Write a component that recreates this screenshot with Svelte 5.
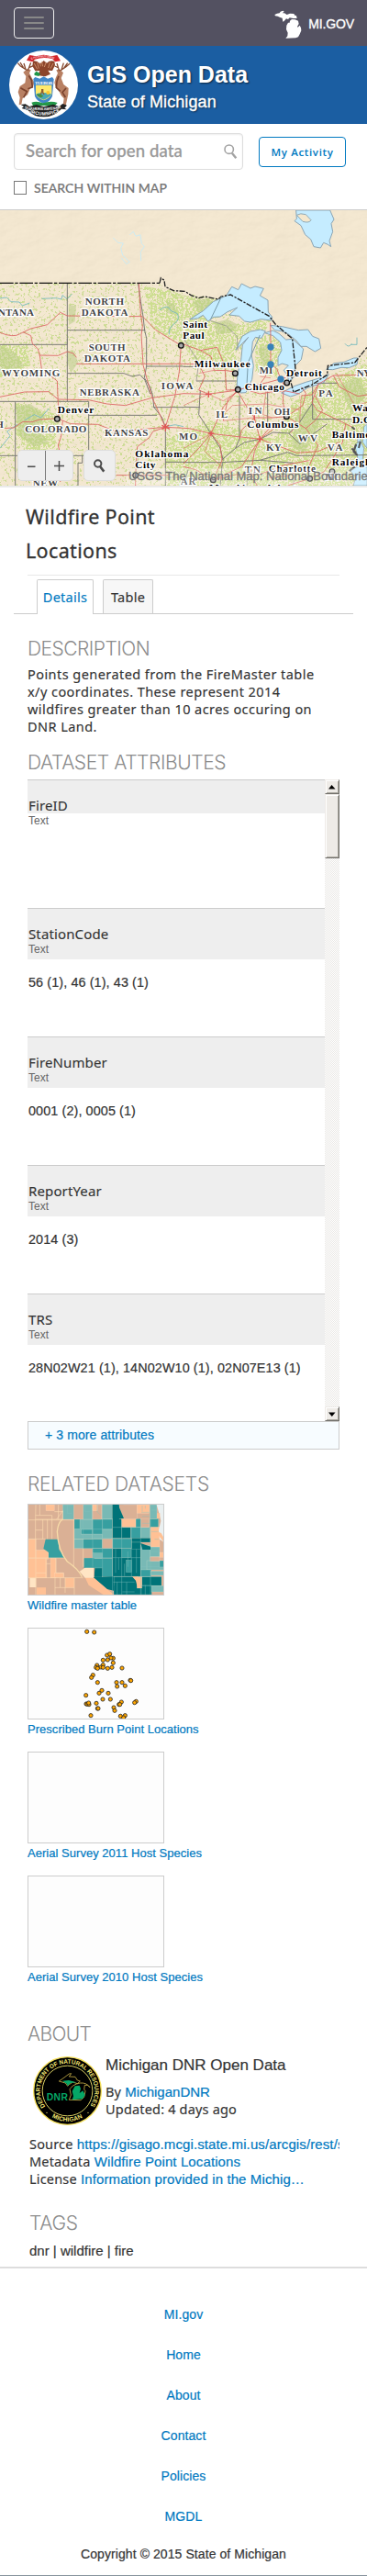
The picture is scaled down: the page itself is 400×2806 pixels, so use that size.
<script>
  const attributes = [
    { name: 'FireID', type: 'Text', values: '' },
    { name: 'StationCode', type: 'Text', values: '56 (1), 46 (1), 43 (1)' },
    { name: 'FireNumber', type: 'Text', values: '0001 (2), 0005 (1)' },
    { name: 'ReportYear', type: 'Text', values: '2014 (3)' },
    { name: 'TRS', type: 'Text', values: '28N02W21 (1), 14N02W10 (1), 02N07E13 (1)' }
  ];
  const footerLinks = ['MI.gov', 'Home', 'About', 'Contact', 'Policies', 'MGDL'];

  // Map labels: text, x, baseline, width
  const states = [
    ['NORTH', 278, 320, 127], ['DAKOTA', 266, 357, 152], ['NTANA', -6, 357, 117],
    ['SOUTH', 290, 471, 120], ['DAKOTA', 275, 507, 151], ['WYOMING', 6, 555, 190],
    ['NEBRASKA', 260, 618, 196], ['IOWA', 527, 597, 104], ['COLORADO', 82, 738, 201],
    ['KANSAS', 342, 750, 142], ['NEW', 107, 915, 82], ['MO', 585, 762, 60], ['H', -14, 723, 24],
    ['MI', 848, 545, 44], ['IL', 706, 690, 38], ['IN', 812, 678, 44], ['OH', 896, 682, 52],
    ['PA', 1042, 620, 46], ['NY', 1166, 556, 46], ['KY', 870, 797, 50], ['WV', 974, 767, 64],
    ['VA', 1070, 797, 50], ['TN', 800, 870, 52], ['AR', 590, 909, 50], ['NC', 1064, 894, 52]
  ];
  const cities = [
    ['Denver', 188, 674, 119], ['Oklahoma', 442, 818, 174], ['City', 442, 854, 66],
    ['Saint', 598, 395, 80], ['Paul', 598, 432, 70], ['Milwaukee', 635, 524, 183],
    ['Chicago', 800, 600, 130], ['Detroit', 936, 556, 116], ['Columbus', 808, 724, 168],
    ['Washington', 1152, 669, 190], ['D.C.', 1152, 709, 70], ['Baltimore', 1085, 755, 160],
    ['Raleigh', 1085, 845, 128], ['Charlotte', 878, 866, 154], ['Memphis', 684, 929, 130], ['Atlanta', 868, 929, 120]
  ];
  const dots = [[187, 694], [592, 454], [769, 545], [778, 598], [938, 576], [937, 686], [443, 878], [697, 893], [1013, 889], [1086, 866]];
  const fires = [[885, 459], [885, 516], [918, 564]];
  const burns = [
    [284,532],[308,534],[350,609],[359,605],[370,619],[363,618],[337,625],[352,624],[370,634],[317,642],[337,641],
    [314,649],[330,648],[319,652],[352,652],[337,649],[366,649],[399,651],[304,674],[299,682],[319,698],[381,698],
    [399,698],[383,711],[409,709],[426,691],[428,692],[333,724],[324,733],[354,733],[281,740],[336,753],[361,753],
    [282,768],[285,769],[291,770],[290,765],[315,766],[319,783],[321,783],[397,762],[389,770],[392,770],[372,780],
    [375,790],[445,760],[440,764],[297,806],[394,808],[409,806],[404,813]
  ];
  // County tiles: x, y, width, height, colour key
  const T = { l: '#78b9b5', m: '#379fa0', d: '#007378', o: '#ffc195', t: '#dab095' };
  const tiles = [
    [93,230,25,62,'o'],[118,265,40,30,'o'],[93,292,60,65,'o'],[165,292,18,65,'o'],[120,385,30,26,'o'],[213,357,30,32,'o'],[150,117,28,20,'o'],[178,340,30,15,'o'],
    [205,117,36,48,'l'],[243,165,60,65,'l'],[243,230,30,30,'l'],[272,117,30,48,'l'],[334,117,34,48,'l'],[303,165,62,65,'m'],[243,165,18,31,'m'],
    [272,230,62,30,'m'],[266,198,36,15,'m'],[334,165,34,32,'m'],[303,260,64,32,'m'],[275,292,93,60,'m'],[305,275,30,17,'l'],[305,213,30,15,'l'],[335,198,33,29,'l'],
    [368,117,34,110,'d'],[398,191,30,36,'d'],[368,228,62,32,'m'],[428,191,32,36,'m'],[444,163,16,28,'m'],[460,191,31,36,'l'],[490,163,28,30,'m'],
    [430,226,62,14,'d'],[368,260,92,92,'d'],[430,240,30,22,'d'],[398,260,30,30,'m'],[412,298,18,40,'m'],[460,250,32,82,'l'],[490,255,32,32,'l'],[480,300,56,30,'l'],[308,324,27,30,'d'],
    [490,117,23,46,'l'],[492,190,30,65,'o'],[460,163,28,28,'t'],[397,163,47,28,'o'],[390,117,58,46,'t'],[448,117,40,28,'o'],[335,228,33,32,'t'],[490,288,32,14,'t'],[522,273,14,16,'o'],[522,300,14,22,'m'],
    [372,352,92,59,'d'],[464,352,64,30,'d'],[462,381,34,30,'d'],[460,330,34,22,'m'],[494,334,42,14,'l'],[495,382,40,20,'l'],[335,352,37,29,'d'],[448,352,16,38,'o'],[303,117,28,48,'t'],[303,117,16,20,'o']
  ];
</script>

<div class="page">
  <header class="top">
    <button class="menu" aria-label="Menu"><i></i><i></i><i></i></button>
    <a class="migov">
      <svg width="30" height="31" viewBox="899 31 90 93" fill="#fff">
        <path d="M900 46 908 42 916 41 919 36 927 33 931 35 926 41 932 41 940 46 950 42 963 43 966 48 971 49 973 58 961 58 949 56 944 61 938 59 931 67 927 69 925 57 918 55 910 51 902 50Z" />
        <path d="M956 61 967 62 977 66 979 76 974 85 976 87 982 81 986 89 987 98 982 110 977 119 969 122 936 123 942 116 943 105 938 94 939 81 944 72 949 72 950 66Z" />
      </svg>
      <span>MI.GOV</span>
    </a>
  </header>

  <section class="brand">
    <svg width="75" height="75" viewBox="30 165 225 225">
      <circle cx="142.5" cy="277.5" r="112.5" fill="#fff" />
      <path d="M87 197 97 180 118 184Q143 174 167 184L187 180 198 199 180 202 172 193Q142 185 114 194L106 202Z" fill="#d3242b" />
      <path id="ribbonTop" d="M103 195Q142 178 181 195" fill="none" />
      <text font-size="9" fill="#fff" font-family="Liberation Sans"><textPath href="#ribbonTop" textLength="76">E PLURIBUS UNUM</textPath></text>
      <path d="M108 199Q121 197 130 208L137 204 143 198 153 206Q163 196 178 200L180 213 171 231 157 230 165 242 148 250 136 248 124 246 130 231 115 232 106 216Z" fill="#8c452b" />
      <path d="M130 204 133 217M136 200 140 217M151 203 145 219M112 207 122 226M174 207 165 224M122 204 127 224M163 204 158 222" stroke="#e8b188" stroke-width="2" fill="none" />
      <path d="M112 240 119 233 132 241 127 249 113 246Z" fill="#1d9547" />
      <path d="M88 226 101 228 96 239 104 254 112 269 108 285 99 288 90 310 74 321 70 341 62 343 65 319 59 301 65 282 82 271 85 249 76 236Z" fill="#b88063" />
      <path d="M194 226 184 229 189 239 182 255 178 270 183 287 190 292 200 312 209 322 206 343 215 345 223 308 224 288 208 276 200 255 207 238Z" fill="#b88063" />
      <path d="M88 229 67 216 58 206M76 220 66 204M84 227 78 207M91 231 101 205M97 220 109 215M197 231 216 218 228 208M210 221 221 206M201 228 208 206M194 232 186 207M192 222 179 216" stroke="#864a30" stroke-width="4" fill="none" />
      <path d="M94 247 103 262 106 285 91 290M67 287 88 299 77 319M192 248 186 266 184 286 197 298M216 288 204 302 214 318" stroke="#7b432e" stroke-width="5" fill="none" />
      <path d="M109 258 115 252 130 257 143 250 156 257 171 252 176 259 171 314Q165 331 144 339 122 332 114 315Z" fill="#4187c9" />
      <path d="M117 278H169V307Q164 321 143 328 121 321 117 307Z" fill="#ffe96c" />
      <path d="M118 307Q142 299 168 307 163 319 143 326 124 321 118 307Z" fill="#4ba7b4" />
      <path d="M119 309Q130 302 142 314L134 319Q124 317 119 309Z" fill="#42903c" />
      <circle cx="157" cy="303" r="6" fill="#ffc62d" />
      <path d="M135 291h7v10l4 8h-4l-4-7-4 8h-3l4-13Z" fill="#965f2b" />
      <text x="114" y="275" textLength="58" font-size="15" font-family="Liberation Serif" font-weight="bold" fill="#fff">TUEBOR</text>
      <path d="M103 335Q121 329 140 337 166 328 188 336L180 345H108Z" fill="#249849" />
      <path d="M68 342 83 340 96 348 119 342 143 349 174 341 193 348 205 339 219 344 211 353 219 358 201 356Q176 382 143 382 110 382 89 359L71 354 78 348Z" fill="#222" />
      <path id="ribbonMid" d="M80 355Q143 367 208 352" fill="none" />
      <path id="ribbonLow" d="M88 364Q143 391 202 362" fill="none" />
      <text font-size="12" fill="#fff" font-family="Liberation Sans" font-weight="bold"><textPath href="#ribbonMid" textLength="120">SI QUÆRIS AMŒNAM</textPath></text>
      <text font-size="15" fill="#fff" font-family="Liberation Sans" font-weight="bold"><textPath href="#ribbonLow" textLength="112">CIRCUMSPICE</textPath></text>
    </svg>
    <div class="brandtext">
      <h1>GIS Open Data</h1>
      <p>State of Michigan</p>
    </div>
  </section>

  <section class="search">
    <div class="row">
      <div class="field">
        <span>Search for open data</span>
        <svg width="15" height="17" viewBox="0 0 15 17" fill="none" stroke="#a3a3a3">
          <circle cx="5.7" cy="5.7" r="4.7" stroke-width="1.6" /><path d="M8.8 9.8 13.3 15.2" stroke-width="2.4" />
        </svg>
      </div>
      <button class="activity">My Activity</button>
    </div>
    <label><span class="box"></span>SEARCH WITHIN MAP</label>
  </section>

  <section class="map">
    <svg width="400" height="300" viewBox="0 12 1200 900">
      <defs>
        <filter id="speckle" x="0" y="0" width="1" height="1" color-interpolation-filters="sRGB">
          <feTurbulence type="fractalNoise" baseFrequency="0.14" numOctaves="3" seed="4" />
          <feColorMatrix values="0 0 0 0 .8  0 0 0 0 .87  0 0 0 0 .56  0 0 0 12 -5.4" />
          <feComposite in2="SourceGraphic" operator="in" />
        </filter>
        <filter id="sparse" x="0" y="0" width="1" height="1" color-interpolation-filters="sRGB">
          <feTurbulence type="fractalNoise" baseFrequency="0.12" numOctaves="3" seed="9" />
          <feColorMatrix values="0 0 0 0 .8  0 0 0 0 .86  0 0 0 0 .58  0 0 0 12 -7" />
          <feComposite in2="SourceGraphic" operator="in" />
        </filter>
        <filter id="relief" x="0" y="0" width="1" height="1" color-interpolation-filters="sRGB">
          <feTurbulence type="fractalNoise" baseFrequency="0.012 0.018" numOctaves="5" seed="2" result="n" />
          <feDiffuseLighting in="n" surfaceScale="7" lighting-color="#fff"><feDistantLight azimuth="225" elevation="62" /></feDiffuseLighting>
        </filter>
      </defs>
      <rect y="12" width="1200" height="900" fill="#f5e8cf" />
      <rect y="12" width="1200" height="900" filter="url(#relief)" opacity=".08" />
      <path d="M460 252H522L560 274 610 284 720 302 790 375 886 372 830 420 780 540 820 600 960 620 1080 550 1160 512 1200 480V912H0V252H460Z" filter="url(#sparse)" />
      <path d="M600 290 720 305 680 372 790 390 830 372 886 370 870 402 780 430 766 540 640 520 600 450ZM835 430 895 415 925 440 920 490 905 560 835 540ZM540 760 690 700 900 760 960 640 1070 570 1200 510V912H540ZM470 260 560 275 600 290 598 450 500 400ZM0 450 90 450 100 520 0 560ZM50 640 190 680 180 790 90 800 50 740Z" filter="url(#speckle)" />
      <g fill="#b9cc86" opacity=".55">
        <path d="M224 320l25 5-4 50-20 12ZM222 470l20 4 14 35-24 35-10-30ZM0 455l50 22 28 45-55 20-23-20ZM52 655l48-10 50 40-30 35 40 50-50 15-50-40ZM545 308l28 14 4 30-33-3ZM630 310l50-10 30 20-60 30ZM700 380l44-12 34 18-20 26-50 6ZM843 462l30-8 10 60-24 10ZM965 690l60-45 20 60-50 100-40-20ZM1110 585l60-30 30 60-50 60Z" />
      </g>
      <g fill="#c5ecff" stroke="#8aa4b3" stroke-width="3" stroke-linejoin="round">
        <path d="M968 12 970 40 963 47 984 62 998 92 1016 107 1026 131 1048 135 1058 118 1072 124 1082 131 1077 112 1088 82 1083 56 1092 42 1079 12Z" />
        <path d="M620 369 664 341 697 311 740 291 758 262 779 272 790 252 819 267 834 261 862 268 850 291 876 306 877 345 890 361 888 372 853 368 819 378 800 375 782 358 750 354 776 330 744 344 720 360 698 361 680 375 664 355 647 365Z" />
        <path d="M771 469 792 424 819 408 851 402 868 407 855 430 835 427 826 442 822 484 829 520 824 565 804 608 786 609 774 590 777 546 788 503 793 452 812 427Z" />
        <path d="M866 413 892 405 912 415 935 435 957 433 992 465 985 500 965 520 965 552 945 575 940 552 928 535 943 519 922 513 909 520 909 493 921 470 917 444 893 422Z" />
        <path d="M884 388 922 392 976 404 1007 402 1022 424 1043 432 1049 463 1030 474 1002 457 984 457 969 438 943 417 921 407 899 404Z" />
        <path d="M920 609 959 588 1000 574 1040 562 1075 548 1058 576 1006 592 974 613 950 621ZM1067 532 1092 512 1125 508 1157 495 1171 495 1167 516 1141 527 1116 526 1088 533Z" />
      </g>
      <path d="M1160 780 1177 765 1190 790 1186 824 1200 850V912H1155L1164 884 1146 864 1172 846 1168 812ZM1170 745 1176 756 1183 770 1169 770ZM1190 720 1200 710V790L1186 770Z" fill="#bfeaff" stroke="#87949b" stroke-width="2" />
      <path d="M970 28Q982 20 1000 26L1017 44Q1012 55 990 49Z" fill="#f4e7cd" stroke="#8fa9b5" stroke-width="3" />
      <g fill="none" stroke="#70b8bd" stroke-width="2.5">
        <path d="M0 300 22 297 36 311 63 312 73 324 97 315M137 301 185 299 201 303 204 290 220 302 235 286M521 339Q549 316 558 340L580 350Q589 369 571 382 550 397 553 418M0 790 33 749 23 735 57 712M80 698 112 680 134 690 160 660M548 718 572 713 600 719" />
        <path d="M1128 448Q1140 464 1150 448M1167 428v23h-20" />
      </g>
      <path d="M370 102 386 118 403 120 395 136 401 159 424 181 413 188 397 168M424 92 436 82 444 97 459 92 463 121 472 130 460 148 461 178" fill="none" stroke="#cdebf3" stroke-width="3" />
      <g fill="none" stroke="#7b7b76" stroke-width="3">
        <path d="M220 252V637M220 404H475M0 451H220V433M220 545H405L432 555 458 550 474 567 491 612M0 637H290M50 637V912M290 637V814M0 814H290M290 682H513M541 728V912M269 814V838H255V912M452 252 460 310 468 360 473 405 479 430V522M479 522H600M479 522 472 560 491 590 500 620 503 655 530 690 541 722M500 656H600M541 835H610M600 523 643 523M642 570H772M783 618V760L770 790 725 828M875 605V720M1022 567V695M1022 695H1150M1031 577H1104M600 655 655 656M655 600 650 680 690 742M600 836 725 836 850 829 960 838M770 790 799 771 850 760 893 738 944 741 977 709 996 680 1022 642M944 741 980 775 1070 710M850 829 940 803 970 814 1200 812M727 838 720 912M690 742 720 790 730 830M600 912 615 860" />
      </g>
      <path d="M600 430 650 510 642 570M541 885 610 885M960 865 960 912M808 850 808 912M686 372 740 390 775 425 778 470" fill="none" stroke="#888" stroke-width="2" />
      <g fill="none" stroke="#dc6261" stroke-width="3" opacity=".85">
        <path d="M0 412Q45 430 65 416L100 399 155 386 197 346 220 357 465 359M75 410 101 422 106 448 124 465 130 486 136 530 187 570 192 690M128 486 190 487 220 474 240 480 250 493M454 252 460 350 466 390 462 420 468 518 497 623 541 721M466 359 510 404 592 454 586 540 572 620 555 675 541 721M250 514H600M0 622 80 606 160 605 190 630 290 632 350 645 410 650 497 625 600 611M0 725 45 723 75 703 105 704 130 696 188 692 230 710 320 712 380 735 541 721M205 700 200 750 190 780 200 820 197 900M541 721 500 735 488 755 449 785 443 878M541 721 620 725 690 742M380 878H550M290 840 355 840M443 878 443 912" />
        <path d="M600 450 655 470 690 490 700 535 740 536 768 540M655 470 710 460 735 520 740 600 778 598M600 514 650 515 670 555 650 600 682 613M600 611 680 613 778 600 730 655 690 742 650 790 600 840M778 600 745 630 730 700M690 742 720 780 726 830 697 893 790 850 850 760 690 742M778 605 804 650 832 690 890 690 937 686 990 650 1000 610 985 590M832 690 790 730 783 760M832 690 850 760 885 720M937 686 890 730 850 760 832 800 820 870 840 912M778 600 810 590 875 575 930 560 950 550M810 600 850 612 885 606 930 602 980 612M884 380 885 430 885 515 905 530 918 564 928 582 925 640 937 686M885 516 865 560 842 590M937 686 1000 725 1030 700 1055 665 1030 618M985 618 1020 615 1041 580 1090 552 1190 550M1090 552 1110 590 1170 620 1200 615M1041 580 1020 640 1036 665 1110 700 1150 720M1000 725 1040 780 1010 850 940 880 880 885M1130 710 1120 770 1090 820 1060 866 1013 889 940 912M850 760 970 805 1040 800 1110 770M697 893 640 860 600 850M697 893 770 876 850 875 930 845 1010 830" />
        <path d="M700 535 650 545M682 613 600 650M682 613 730 635 778 605M730 680 760 650 870 645 980 665M730 700 832 690M985 618 980 700 950 740M1100 545 1160 650 1200 640M600 790 690 742 670 800 725 850M885 560 850 555M870 602 860 680 890 690" stroke-width="2" />
      </g>
      <path d="M541 710v24M529 715l26 12M529 728l24-14M682 604v20M672 613h20M778 587v22M767 597h20M850 750v20M840 760h20M832 681v18M690 733v18M681 741h19M937 676v20" stroke="#df5554" stroke-width="4" />
      <path d="M0 250H522" stroke="#111" stroke-width="4" stroke-dasharray="44 5 10 5" />
      <path d="M522 250 526 233 537 241 540 262 568 275 605 277 625 290 650 299 670 294 714 303 723 294 754 288 880 358 900 384 956 432 966 530 950 570 960 606 1020 582 1070 550 1072 520 1160 510 1200 460" fill="none" stroke="#222" stroke-width="4" stroke-dasharray="18 5 7 4" />
      <path d="M688 370 725 293M806 602 811 510 850 420" fill="none" stroke="#789aa8" stroke-width="3" />
      <path d="M1150 790l14 15M1155 800l14 13M1165 777l-10 24M1148 829l16 11M1160 850l-18 14M1178 769l-5 20M1150 720l10 8" stroke="#555" stroke-width="6" />
      <g fill="#aaa" stroke="#111" stroke-width="4">{#each dots as [x, y]}<circle cx={x} cy={y} r="8.5" />{/each}</g>
      <g class="halo">
        <g font-family="Liberation Serif" font-weight="bold" font-size="33" fill="#454545">
          {#each states as [name, x, y, w]}<text {x} {y} textLength={w}>{name}</text>{/each}
        </g>
        <g font-family="Liberation Serif" font-weight="bold" font-size="34" fill="#000">
          {#each cities as [name, x, y, w]}<text {x} {y} textLength={w}>{name}</text>{/each}
        </g>
      </g>
      <g fill="#3782b9">{#each fires as [x, y]}<circle cx={x} cy={y} r="11" />{/each}</g>
    </svg>
    <div class="controls">
      <div class="zoomers">
        <button aria-label="Zoom out"><svg width="9" height="9"><path d="M0 5.3H8.5" stroke="#4d4d4d" stroke-width="1.5" /></svg></button>
        <button aria-label="Zoom in"><svg width="11" height="11"><path d="M0 5.5H11M5.5 0V11" stroke="#4d4d4d" stroke-width="1.5" /></svg></button>
      </div>
      <button class="find" aria-label="Find"><svg width="13" height="15" viewBox="0 0 13 15" fill="none" stroke="#4c4c4c"><circle cx="4.7" cy="5" r="3.7" stroke-width="2" /><path d="M7 8 11.3 13.6" stroke-width="2.6" /></svg></button>
    </div>
    <div class="credit">USGS The National Map: National Boundaries</div>
  </section>

  <main>
    <h2 class="title">Wildfire Point<br />Locations</h2>
    <nav class="tabs"><a class="on">Details</a><a class="off">Table</a></nav>

    <h3 class="h-desc">Description</h3>
    <p class="desc">Points generated from the FireMaster table<br />x/y coordinates. These represent 2014<br />wildfires greater than 10 acres occuring on<br />DNR Land.</p>

    <h3 class="h-attr">Dataset Attributes</h3>
    <div class="attrs">
      <div class="list">
        {#each attributes as a}
          <div class="attr">
            <div class="head" class:short={!a.values}>
              <div class="name">{a.name}</div>
              <div class="type">{a.type}</div>
            </div>
            <div class="vals">{a.values}</div>
          </div>
        {/each}
      </div>
      <div class="bar">
        <span class="btn"><svg width="8" height="5"><path d="M0 4.5 3.5 0 7.5 4.5Z" /></svg></span>
        <span class="thumb"></span>
        <span class="btn end"><svg width="8" height="5"><path d="M0 .5H7.5L3.8 5Z" /></svg></span>
      </div>
    </div>
    <a class="more">+ 3 more attributes</a>

    <h3 class="h-rel">Related Datasets</h3>
    <div class="related">
      <a class="card">
        <div class="pic">
          <svg width="147" height="98" viewBox="93 117 441 294">
            <rect x="93" y="117" width="441" height="294" fill="#dab095" />
            <g stroke="#fff3dd" stroke-opacity=".35" stroke-width="1.5">{#each tiles as [x, y, w, h, c]}<rect {x} {y} width={w} height={h} fill={T[c]} />{/each}</g>
            <path d="M390 117H401L447 163 397 163Z" fill="#dab095" /><path d="M386 117 405 162H368V117Z" fill="#007378" />
            <path d="M241 324H275V292L310 325 308 354H335L372 411H93V357H240Z" fill="#dab095" />
            <path d="M305 354 334 354 372 352V398L350 393Z" fill="#007378" />
            <path d="M278 355H305L350 393 372 411H338L290 380Z" fill="#ffc195" />
            <path d="M213 357H243V388H213ZM120 388H150V411H120Z" fill="#ffc195" />
            <path d="M275 292H308V324H275Z" fill="#379fa0" />
            <path d="M260 335 278 323H306V356H278Z" fill="#ffe5c4" /><path d="M97 357H118V387H97Z" fill="#ffe5c4" />
            <path d="M149 230H190L193 263 211 291H159V273L142 261Z" fill="#379fa0" />
            <path d="M117 117 116 165H205V137L185 165M93 167H243M191 117V165M116 152H170V165M130 117V152M178 140H205M116 165V292M93 229H149M140 165V229M155 165V229M170 165V229M116 200H140M93 291H209M117 292V411M150 292V355M183 292V340M93 356H272M180 356V411M118 340H150M150 310H165M183 340H208V356M180 388H243M213 356V405M243 356V411M197 356V388M241 165V320M272 260V320" fill="none" stroke="#fbd9b0" stroke-width="2" />
            <path d="M205 165Q190 174 187 205 190 268 220 303 256 327 268 353" fill="none" stroke="#f8dca9" stroke-width="4" />
            <path d="M220 117V145H235M278 117V140H295M318 117V140L330 152M272 165V260M303 165V320M335 117V352M368 227V411M398 170V411M430 191V352M460 165V411M492 163V411M243 197H368M368 191H460M303 228H430M303 260H400M303 290H460M368 352H528M378 262V340M388 330V290M407 350V310M418 270V320M446 262V340M383 370V411M414 370V411M475 380V411M370 370H440M400 402H440M462 382H530M462 142H488M465 155H488M465 178H490M465 120V140M475 120V130M495 135H513M495 205H520M505 230H520M460 320H536M495 270H522" fill="none" stroke="#84c4bd" stroke-width="1.5" opacity=".8" />
            <path d="M512 117H536V240L522 230 519 200 526 170 520 145Z" fill="#eaf0f1" /><path d="M513 145H523V162H513M514 205 527 210 536 225V240L520 220Z" fill="#ffc195" />
            <path d="M460 243 492 254V264H466Z" fill="#007378" /><path d="M432 352H450V390L444 365Z" fill="#ffc195" />
          </svg>
        </div>
        <span>Wildfire master table</span>
      </a>
      <a class="card">
        <div class="pic"><svg width="147" height="98" viewBox="93 522 441 294"><g fill="#ffa600" stroke="#222" stroke-width="2.4">{#each burns as [x, y]}<circle cx={x} cy={y} r="6.3" />{/each}</g></svg></div>
        <span>Prescribed Burn Point Locations</span>
      </a>
      <a class="card"><div class="pic"></div><span>Aerial Survey 2011 Host Species</span></a>
      <a class="card"><div class="pic"></div><span>Aerial Survey 2010 Host Species</span></a>
    </div>

    <h3 class="h-about">About</h3>
    <div class="about">
      <svg width="75" height="75" viewBox="108 150 225 225">
        <circle cx="220.5" cy="262.5" r="110.5" fill="#000" stroke="#f4df58" stroke-width="4" />
        <circle cx="220.5" cy="262.5" r="82" fill="none" stroke="#d9cf63" stroke-width="3" />
        <path id="arcTop" d="M148.900 315.500A89 89 0 1 1 292.100 315.500" fill="none" />
        <path id="arcBottom" d="M160 342A100 100 0 0 0 282 342" fill="none" />
        <g font-family="Liberation Sans" font-weight="bold" font-size="20" fill="#f3e774">
          <text><textPath href="#arcTop" startOffset="2" textLength="385" lengthAdjust="spacingAndGlyphs">DEPARTMENT OF NATURAL RESOURCES</textPath></text>
          <text><textPath href="#arcBottom" startOffset="12" textLength="105">MICHIGAN</textPath></text>
        </g>
        <circle cx="153" cy="334" r="2" fill="#f3e774" /><circle cx="288" cy="334" r="2" fill="#f3e774" />
        <path d="M193 231 210 219 226 207 233 206 226 216 246 217 253 228 262 231 253 239 238 234 226 242 221 247 214 237ZM262 237Q283 235 294 251 287 241 277 244L275 258 279 263 275 283 264 293 226 292 232 276 228 257 238 246 250 240Z" fill="none" stroke="#c5ad47" stroke-width="2.5" />
        <path d="M204 230 225 228 249 235 231 237 221 246 218 239ZM245 247 260 245 264 256 260 270 271 262 278 276 270 289 236 292 240 280 236 264Z" fill="#05a766" />
        <text x="152" y="294" textLength="70" font-family="Liberation Sans" font-weight="bold" font-size="31" fill="#05a766">DNR</text>
      </svg>
      <div>
        <h4>Michigan DNR Open Data</h4>
        <p><b class="k">By</b> <a>MichiganDNR</a></p>
        <p class="k">Updated: 4 days ago</p>
      </div>
    </div>
    <div class="meta">
      <p><b class="k">Source</b> <a>https://gisago.mcgi.state.mi.us/arcgis/rest/services</a></p>
      <p><b class="k">Metadata</b> <a>Wildfire Point Locations</a></p>
      <p><b class="k">License</b> <a>Information provided in the Michig…</a></p>
    </div>

    <h3 class="h-tags">Tags</h3>
    <p class="tags">dnr | wildfire | fire</p>
  </main>

  <footer>
    {#each footerLinks as link}<a>{link}</a>{/each}
    <p>Copyright © 2015 State of Michigan</p>
  </footer>
</div>

<style>
  :global(body) { background: #fff; }
  .page { width: 400px; height: 2806px; overflow: hidden; box-sizing: border-box; border-bottom: 1px solid #87939d; font-family: "Liberation Sans", sans-serif; color: #333; }
  .page :global(*) { box-sizing: border-box; }
  h1, h2, h3, h4, p { margin: 0; font-weight: normal; }
  a { color: #0079c1; text-decoration: none; }
  button { padding: 0; margin: 0; }
  svg { display: block; flex: none; }

  .top { height: 50px; background: #535161; display: flex; justify-content: space-between; padding: 8px 14px 0 15px; }
  .menu { width: 44px; height: 34px; border: 1px solid #eee; border-radius: 4px; background: none; display: flex; flex-direction: column; align-items: center; justify-content: center; gap: 4px; }
  .menu i { width: 22px; height: 2px; border-radius: 1px; background: #888; }
  .migov { display: flex; gap: 7px; color: #fff; padding-top: 3px; }
  .migov span { font-size: 14px; line-height: 30px; letter-spacing: -.15px; -webkit-text-stroke: .35px #fff; }

  .brand { height: 85px; background: #1b5ea2; display: flex; padding: 5px 10px; gap: 10px; color: #fff; }
  .brandtext { padding-top: 10px; text-shadow: 1px 1px 2px rgba(0, 0, 0, .6); }
  h1 { font-size: 25px; font-weight: bold; line-height: 32px; }
  .brandtext p { font-size: 18px; line-height: 28px; letter-spacing: .1px; -webkit-text-stroke: .35px #fff; }

  .search { height: 93px; padding: 10px 15px 0; }
  .row { display: flex; gap: 17px; align-items: center; }
  .field { width: 250px; height: 40px; border: 1px solid #ddd; border-radius: 4px; box-shadow: inset 0 1px 2px #eee; display: flex; justify-content: space-between; align-items: center; padding: 0 5px 0 12px; font: 500 18.5px/36px Lato, sans-serif; color: #999; letter-spacing: .13px; }
  .field span { height: 38px; -webkit-text-stroke: .25px; }
  .activity { width: 95px; height: 33px; border: 1px solid #0079c1; border-radius: 4px; background: #fff; color: #0079c1; font: 600 11.500px/31px "Open Sans", sans-serif; letter-spacing: .65px; }
  label { display: flex; align-items: center; gap: 8px; margin-top: 12px; height: 15px; font: 500 14px/15px Lato, sans-serif; color: #777; letter-spacing: .04px; -webkit-text-stroke: .2px; }
  .box { width: 14px; height: 15px; border: 1px solid #777; }

  .map { position: relative; height: 303px; border-top: 1px solid #ccc; border-bottom: 2px solid #eaeaea; overflow: hidden; }
  .halo text { paint-order: stroke; stroke: #fff; stroke-width: 8px; stroke-linejoin: round; }
  .controls { position: absolute; left: 19px; top: 261px; display: flex; gap: 11px; }
  .zoomers { display: flex; border-radius: 5px; border: 1px solid #ddd; overflow: hidden; }
  .controls button { width: 29px; height: 32px; border: 0; background: #eee; display: flex; align-items: center; justify-content: center; }
  .zoomers button + button { border-left: 1px solid #777; width: 30px; }
  .controls .find { width: 35px; height: 34px; border: 1px solid #ddd; border-radius: 5px; }
  .credit { position: absolute; left: 138px; right: 0; top: 281px; padding-left: 2px; height: 18px; font-size: 13px; line-height: 18px; white-space: nowrap; overflow: hidden; color: #777; -webkit-text-stroke: .3px #777; background: rgba(255, 255, 255, .3); }

  main { height: 1938px; padding: 13px 30px 0; }
  .title { margin: 0 0 0 -2px; font: 400 21.500px/37px "Noto Sans", sans-serif; letter-spacing: .35px; height: 82px; width: 342px; -webkit-text-stroke: .3px; }
  .tabs { margin: 0 -15px; height: 43px; border-bottom: 1px solid #ccc; padding: 5px 25px 0; display: flex; gap: 10px; position: relative; }
  .tabs::before { content: ""; position: absolute; left: 15px; right: 15px; top: 0; height: 1px; background: #e8e8e8; }
  .tabs a { height: 38px; border: 1px solid #ccc; border-bottom: 0; border-radius: 2px 2px 0 0; background: #fff; font: 400 14.500px/36px "Noto Sans", sans-serif; letter-spacing: .25px; text-align: center; width: 62px; -webkit-text-stroke: .15px; }
  .tabs .off { width: 55px; height: 37px; background: #f7f7f7; color: #333; }

  h3 { font: 300 21px/24px Inter, sans-serif; letter-spacing: -.42px; color: #8c8c8c; text-transform: uppercase; height: 24px; white-space: nowrap; }
  .h-desc { margin-top: 26px; letter-spacing: -.53px; }
  .desc { margin-top: 6px; font: 400 14.500px/19px "Noto Sans", sans-serif; letter-spacing: .44px; white-space: nowrap; -webkit-text-stroke: .15px; }
  .h-attr { margin-top: 18px; }
  .attrs { display: flex; margin-top: 6px; height: 699px; overflow: hidden; }
  .list { width: 324px; }
  .attr { height: 140px; border-top: 1px solid #ccc; }
  .head { height: 55px; background: #eee; padding: 17px 0 0 1px; }
  .head.short { background: linear-gradient(#eee 36px, transparent 36px); }
  .name { font: 400 15px/20px "Noto Sans", sans-serif; height: 20px; letter-spacing: .13px; -webkit-text-stroke: .12px; }
  .type { font-size: 12px; line-height: 14px; color: #666; }
  .vals { padding: 15px 0 0 1px; font-size: 14.400px; line-height: 20px; letter-spacing: .1px; }
  .vals, .tags, .about h4, .more, footer, .card span, .meta a, .about a { -webkit-text-stroke: .2px; }
  .bar { width: 16px; display: flex; flex-direction: column; background: repeating-conic-gradient(#eae8e5 0 25%, #fff 0 50%) 0 0 / 2px 2px; }
  .btn, .thumb { display: flex; align-items: center; justify-content: center; background: #eeebe7; border: 1px solid; border-color: #eeebe7 #716f6b #716f6b #eeebe7; box-shadow: inset 1px 1px #fff, inset -1px -1px #aaa79f; height: 16px; }
  .thumb { height: 70px; }
  .end { margin-top: auto; }
  .more { display: block; height: 31px; border: 1px solid #ccc; background: #f7fcff; padding-left: 18px; font-size: 14px; line-height: 28px; letter-spacing: .1px; }

  .h-rel { margin-top: 26px; letter-spacing: -.24px; }
  .related { margin-top: 9px; display: grid; grid-auto-rows: 135px; }
  .card { display: block; }
  .pic { width: 149px; height: 100px; border: 1px solid #ccc; background: #fdfdfd; overflow: hidden; }
  .card span { display: block; font-size: 13px; line-height: 22px; letter-spacing: .03px; }
  .h-about { margin-top: 26px; letter-spacing: -.65px; }
  .about { display: flex; padding: 12px 0 0 6px; height: 92px; gap: 4px; }
  .about h4 { font-size: 17px; line-height: 26px; margin: -3px 0 6px; }
  .about p, .meta p { font-size: 15px; line-height: 19px; height: 19px; white-space: nowrap; }
  .k, .about p.k { font: 400 14.500px/19px "Noto Sans", sans-serif; letter-spacing: .18px; -webkit-text-stroke: .15px; }
  .meta { padding: 0 0 0 2px; margin-top: 6px; overflow: hidden; }
  .meta a { letter-spacing: .11px; }
  .h-tags { margin: 27px 0 0 2px; letter-spacing: -.3px; }
  .tags { margin: 7px 0 0 2px; font-size: 15px; line-height: 22px; }

  footer { height: 336px; border-top: 2px solid #ddd; padding-top: 28px; display: flex; flex-direction: column; align-items: center; font-size: 14px; letter-spacing: .08px; }
  footer a { height: 44px; line-height: 44px; }
  footer p { line-height: 38px; }
</style>
